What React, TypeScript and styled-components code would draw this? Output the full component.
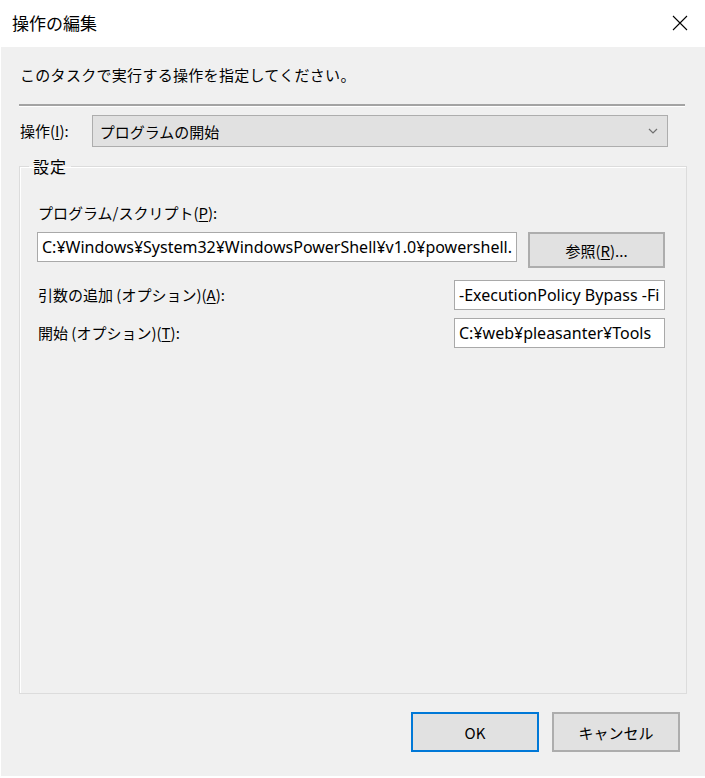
import React from "react";
import styled, { createGlobalStyle } from "styled-components";

const Global = createGlobalStyle`
  html, body { margin: 0; padding: 0; background: #ffffff; }
  body { font-family: "Noto Sans", "Noto Sans CJK JP", sans-serif; }
  * { box-sizing: border-box; }
`;

const JP = `"Noto Sans CJK JP", "Noto Sans", sans-serif`;
const LATIN = `"Noto Sans", "Noto Sans CJK JP", sans-serif`;

const Window = styled.div`
  width: 705px;
  height: 778px;
  display: flex;
  flex-direction: column;
  background: #ffffff;
  overflow: hidden;
`;

const TitleBar = styled.div`
  height: 47px;
  flex: none;
  display: flex;
  align-items: center;
  justify-content: space-between;
  padding: 0 17px 2px 12px;
  background: #ffffff;
`;

const Title = styled.div`
  font-family: ${JP};
  font-size: 17px;
  line-height: 24px;
  color: #000;
`;

const CloseButton = styled.div`
  width: 16px;
  height: 16px;
  display: flex;
  align-items: center;
  justify-content: center;
`;

const Body = styled.div`
  flex: 1;
  margin: 0 0 2px 1px;
  background: #f0f0f0;
  display: flex;
  flex-direction: column;
  padding: 18px 18px 24px 17px;
`;

const Instruction = styled.div`
  font-family: ${JP};
  font-size: 15px;
  line-height: 20px;
  color: #000;
  padding-left: 2px;
  letter-spacing: 0.3px;
`;

const Separator = styled.div`
  margin: 19px 2px 0 1px;
  height: 3px;
  border-top: 2px solid #a3a3a3;
  border-bottom: 1px solid #ffffff;
`;

const ActionRow = styled.div`
  margin-top: 8px;
  display: flex;
  align-items: center;
  gap: 23px;
  padding-left: 2px;
  padding-right: 19px;
`;

const Label = styled.span`
  font-family: ${JP};
  font-size: 15px;
  line-height: 20px;
  color: #000;
  white-space: nowrap;
`;

const U = styled.span`
  text-decoration: underline;
  text-underline-offset: 2px;
`;

const Combo = styled.div`
  flex: 1;
  height: 32px;
  background: #e1e1e1;
  border: 1px solid #adadad;
  display: flex;
  align-items: center;
  justify-content: space-between;
  padding: 0 9px 0 7px;
`;

const ComboText = styled.span`
  font-family: ${JP};
  font-size: 15px;
  color: #000;
`;

const Group = styled.fieldset`
  flex: 1;
  margin: 9px 0 0 1px;
  padding: 0 21px 0 17px;
  border: 1px solid #dcdcdc;
  box-shadow: inset 1px 1px 0 #ffffff;
  min-width: 0;
  display: flex;
  flex-direction: column;
`;

const Legend = styled.legend`
  font-family: ${JP};
  font-size: 16px;
  line-height: 20px;
  color: #000;
  margin-left: -8px;
  padding: 0 4px;
  letter-spacing: 1px;
`;

const FieldLabel = styled(Label)`
  margin-top: 27px;
  padding-left: 1px;
`;

const PathRow = styled.div`
  margin-top: 9px;
  display: flex;
  align-items: flex-start;
  gap: 11px;
`;

const TextBox = styled.input<{ $width?: number }>`
  height: 30px;
  width: ${(p) => (p.$width ? `${p.$width}px` : "auto")};
  flex: ${(p) => (p.$width ? "none" : "1")};
  min-width: 0;
  background: #ffffff;
  border: 1px solid #a9a9a9;
  padding: 0 4px;
  font-family: ${LATIN};
  font-size: 16px;
  color: #000;
  outline: none;
  margin: 0;
`;

const Button = styled.button<{ $primary?: boolean; $w: number; $h: number }>`
  width: ${(p) => p.$w}px;
  height: ${(p) => p.$h}px;
  flex: none;
  background: #e1e1e1;
  border: 2px solid ${(p) => (p.$primary ? "#0078d7" : "#adadad")};
  font-family: ${JP};
  font-size: 15px;
  color: #000;
  padding: 0;
  margin: 0;
  display: flex;
  align-items: center;
  justify-content: center;
`;

const OptionRow = styled.div<{ $gap: number }>`
  margin-top: ${(p) => p.$gap}px;
  display: flex;
  align-items: center;
  justify-content: space-between;
  padding-left: 1px;
`;

const ButtonRow = styled.div`
  margin-top: 18px;
  display: flex;
  justify-content: flex-end;
  gap: 13px;
  padding-right: 7px;
`;

export default function App() {
  return (
    <>
      <Global />
      <Window>
        <TitleBar>
          <Title>操作の編集</Title>
          <CloseButton>
            <svg width="16" height="16" viewBox="0 0 16 16">
              <path d="M1 1 L15 15 M15 1 L1 15" stroke="#000" strokeWidth="1.1" fill="none" />
            </svg>
          </CloseButton>
        </TitleBar>
        <Body>
          <Instruction>このタスクで実行する操作を指定してください。</Instruction>
          <Separator />
          <ActionRow>
            <Label>
              操作(<U>I</U>):
            </Label>
            <Combo>
              <ComboText>プログラムの開始</ComboText>
              <svg width="10" height="6" viewBox="0 0 10 6">
                <path d="M1 1 L5 5 L9 1" stroke="#707070" strokeWidth="1.2" fill="none" />
              </svg>
            </Combo>
          </ActionRow>
          <Group>
            <Legend>設定</Legend>
            <FieldLabel>
              プログラム/スクリプト(<U>P</U>):
            </FieldLabel>
            <PathRow>
              <TextBox
                readOnly
                defaultValue="C:¥Windows¥System32¥WindowsPowerShell¥v1.0¥powershell.exe"
              />
              <Button $w={137} $h={36}>
                参照(<U>R</U>)...
              </Button>
            </PathRow>
            <OptionRow $gap={12}>
              <Label>
                引数の追加 (オプション)(<U>A</U>):
              </Label>
              <TextBox
                $width={211}
                readOnly
                defaultValue="-ExecutionPolicy Bypass -File C:¥web¥pleasanter¥Tools¥run.ps1"
              />
            </OptionRow>
            <OptionRow $gap={8}>
              <Label>
                開始 (オプション)(<U>T</U>):
              </Label>
              <TextBox $width={211} readOnly defaultValue="C:¥web¥pleasanter¥Tools" />
            </OptionRow>
          </Group>
          <ButtonRow>
            <Button $primary $w={128} $h={40}>
              OK
            </Button>
            <Button $w={128} $h={40}>
              キャンセル
            </Button>
          </ButtonRow>
        </Body>
      </Window>
    </>
  );
}
